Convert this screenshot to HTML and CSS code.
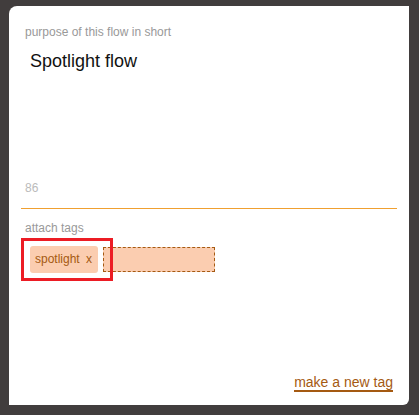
FILE: index.html
```html
<!DOCTYPE html>
<html lang="en">
<head>
    <meta charset="UTF-8">
    <meta name="viewport" content="width=device-width, initial-scale=1.0">
    <title>Flow details</title>
    <link rel="stylesheet" href="styles.css">
</head>
<body>
    <div class="panel">
        <div class="purpose">
            <label class="field-label">purpose of this flow in short</label>
            <div class="purpose-text">Spotlight flow</div>
            <div class="char-count">86</div>
        </div>
        <div class="tags">
            <label class="field-label">attach tags</label>
            <div class="tag-row">
                <span class="tag">spotlight <span class="tag-remove">x</span></span>
                <span class="tag-input"></span>
                <span class="highlight"></span>
            </div>
        </div>
        <div class="footer">
            <a class="new-tag" href="#">make a new tag</a>
        </div>
    </div>
</body>
</html>
```

FILE: styles.css
```css
body {
    margin: 0;
    background-color: #413d3d;
    font-family: "Liberation Sans", Arial, sans-serif;
    height: 415px;
    overflow: hidden;
}
.panel {
    margin: 6px 0 0 9px;
    width: 400px;
    height: 399px;
    background: #fff;
    border-radius: 8px 0 6px 0;
    padding: 0 12px;
    box-sizing: border-box;
    display: flex;
    flex-direction: column;
}
.field-label {
    display: block;
    padding-left: 4px;
    font-size: 12px;
    color: #999;
}
.purpose {
    padding-top: 19px;
    border-bottom: 1px solid #f0a030;
    height: 203px;
    box-sizing: border-box;
}
.purpose-text {
    margin: 12px 0 0 9px;
    font-size: 18px;
    color: #111;
    height: 130px;
}
.char-count {
    padding-left: 4px;
    font-size: 12px;
    color: #bbb;
}
.tags {
    padding-top: 12px;
}
.tag-row {
    position: relative;
    display: flex;
    align-items: center;
    margin-top: 11px;
    padding-left: 9px;
}
.tag {
    background: #fbcdb0;
    color: #a55a12;
    font-size: 12px;
    border-radius: 3px;
    padding: 6px 6px 7px 5px;
}
.tag-remove {
    margin-left: 3px;
}
.tag-input {
    margin-left: 5px;
    width: 110px;
    height: 23px;
    background: #fbcdb0;
    border: 1px dashed #a55a12;
}
.highlight {
    position: absolute;
    left: 0;
    top: -8px;
    width: 86px;
    height: 37px;
    border: 3px solid #ec1c24;
}
.footer {
    margin-top: auto;
    padding-bottom: 14px;
    text-align: right;
    padding-right: 4px;
}
.new-tag {
    font-size: 14px;
    color: #a55a12;
    text-decoration: none;
    border-bottom: 2px solid #a55a12;
}
```
